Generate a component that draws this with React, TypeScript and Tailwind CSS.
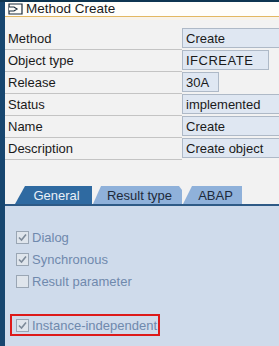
import React from "react";

const rows: { label: string; value: string; w: string; mono?: boolean }[] = [
  { label: "Method", value: "Create", w: "w-[120px]" },
  { label: "Object type", value: "IFCREATE", w: "w-[87px]", mono: true },
  { label: "Release", value: "30A", w: "w-[37px]" },
  { label: "Status", value: "implemented", w: "w-[120px]" },
  { label: "Name", value: "Create", w: "w-[120px]" },
  { label: "Description", value: "Create object", w: "w-[120px]" },
];

function Check({ checked }: { checked: boolean }) {
  return (
    <svg width="13" height="13" viewBox="0 0 13 13" className="shrink-0">
      <rect x="0.5" y="0.5" width="12" height="12" fill="#dfe5ec" stroke="#9aa6b4" />
      {checked && (
        <path d="M3 6.5 L5.5 9 L10 3.5" fill="none" stroke="#7d8a99" strokeWidth="1.6" />
      )}
    </svg>
  );
}

function CheckRow({ label, checked }: { label: string; checked: boolean }) {
  return (
    <div className="h-[22px] flex items-center gap-[3px]">
      <Check checked={checked} />
      <span className="text-[13px] text-[#6f89ad] leading-none">{label}</span>
    </div>
  );
}

export default function App() {
  return (
    <div className="w-[279px] h-[346px] overflow-hidden flex flex-col bg-[#f2f2f2] font-['Liberation_Sans',Arial,sans-serif] text-[#1a1a1a]">
      <div className="h-[2px] bg-[#0f3550] shrink-0" />
      <div className="flex flex-1 min-h-0">
        <div className="w-[5px] bg-[#17466f] shrink-0" />
        <div className="flex-1 flex flex-col min-w-0 overflow-hidden">
          {/* title */}
          <div className="h-[15px] bg-[#fffefa] border-b border-[#e3b862] flex items-center pl-[3px] gap-[2px] shrink-0">
            <svg width="16" height="12" viewBox="0 0 16 12">
              <path d="M1 1 H14 V11 H1 Z" fill="none" stroke="#1a2a3a" strokeWidth="1.2" />
              <path d="M1 4 H6 L9 6 L6 8 H1" fill="#fffefa" stroke="#1a2a3a" strokeWidth="1.2" />
            </svg>
            <span className="text-[13.5px] leading-none">Method Create</span>
          </div>
          <div className="h-[3px] bg-[#f8f3ea] shrink-0" />
          {/* fields */}
          <div className="flex flex-col pt-[8px] shrink-0">
            {rows.map((r) => (
              <div key={r.label} className="flex h-[22px]">
                <div className="w-[177px] shrink-0 border-b border-[#c4c4c4] flex items-center pl-[3px] text-[13px] leading-none">
                  {r.label}
                </div>
                <div className="flex-1 flex items-start">
                  <div
                    className={`${r.w} shrink-0 h-[20px] bg-[#dfe7f2] border border-[#aeb9c7] flex items-center pl-[3px] text-[13px] leading-none ${r.mono ? "tracking-[0.5px]" : ""}`}
                  >
                    {r.value}
                  </div>
                </div>
              </div>
            ))}
          </div>
          {/* tabs */}
          <div className="flex items-end h-[18px] mt-[26px] pl-[10px] gap-[1px] shrink-0">
            <div className="w-[77px] h-[18px] bg-[#2f6aa1] text-[#e9f0f8] text-[13px] leading-none flex items-center justify-center pl-[6px] [clip-path:polygon(0_100%,10px_0,100%_0,100%_100%)]">
              General
            </div>
            <div className="w-[89px] h-[18px] bg-[#8fb1da] text-[#1d2a3a] text-[13px] leading-none flex items-center justify-center pl-[4px] [clip-path:polygon(0_100%,8px_0,calc(100%-3px)_0,100%_4px,100%_100%)]">
              Result type
            </div>
            <div className="w-[59px] h-[18px] bg-[#8fb1da] text-[#1d2a3a] text-[13px] leading-none flex items-center justify-center pl-[6px] [clip-path:polygon(0_100%,9px_0,100%_0,100%_100%)]">
              ABAP
            </div>
          </div>
          <div className="h-[2px] bg-[#2e5a86] shrink-0" />
          {/* panel */}
          <div className="flex-1 bg-[#cfdbeb] pt-[20px] pl-[11px] flex flex-col">
            <CheckRow label="Dialog" checked />
            <CheckRow label="Synchronous" checked />
            <CheckRow label="Result parameter" checked={false} />
            <div className="h-[22px]" />
            <div className="w-[150px] h-[22px] -ml-[6px] border-2 border-[#dd1a1a] flex items-center pl-[4px]">
              <div className="flex items-center gap-[3px]">
                <Check checked />
                <span className="text-[13px] text-[#6f89ad] leading-none">Instance-independent</span>
              </div>
            </div>
          </div>
        </div>
      </div>
    </div>
  );
}
